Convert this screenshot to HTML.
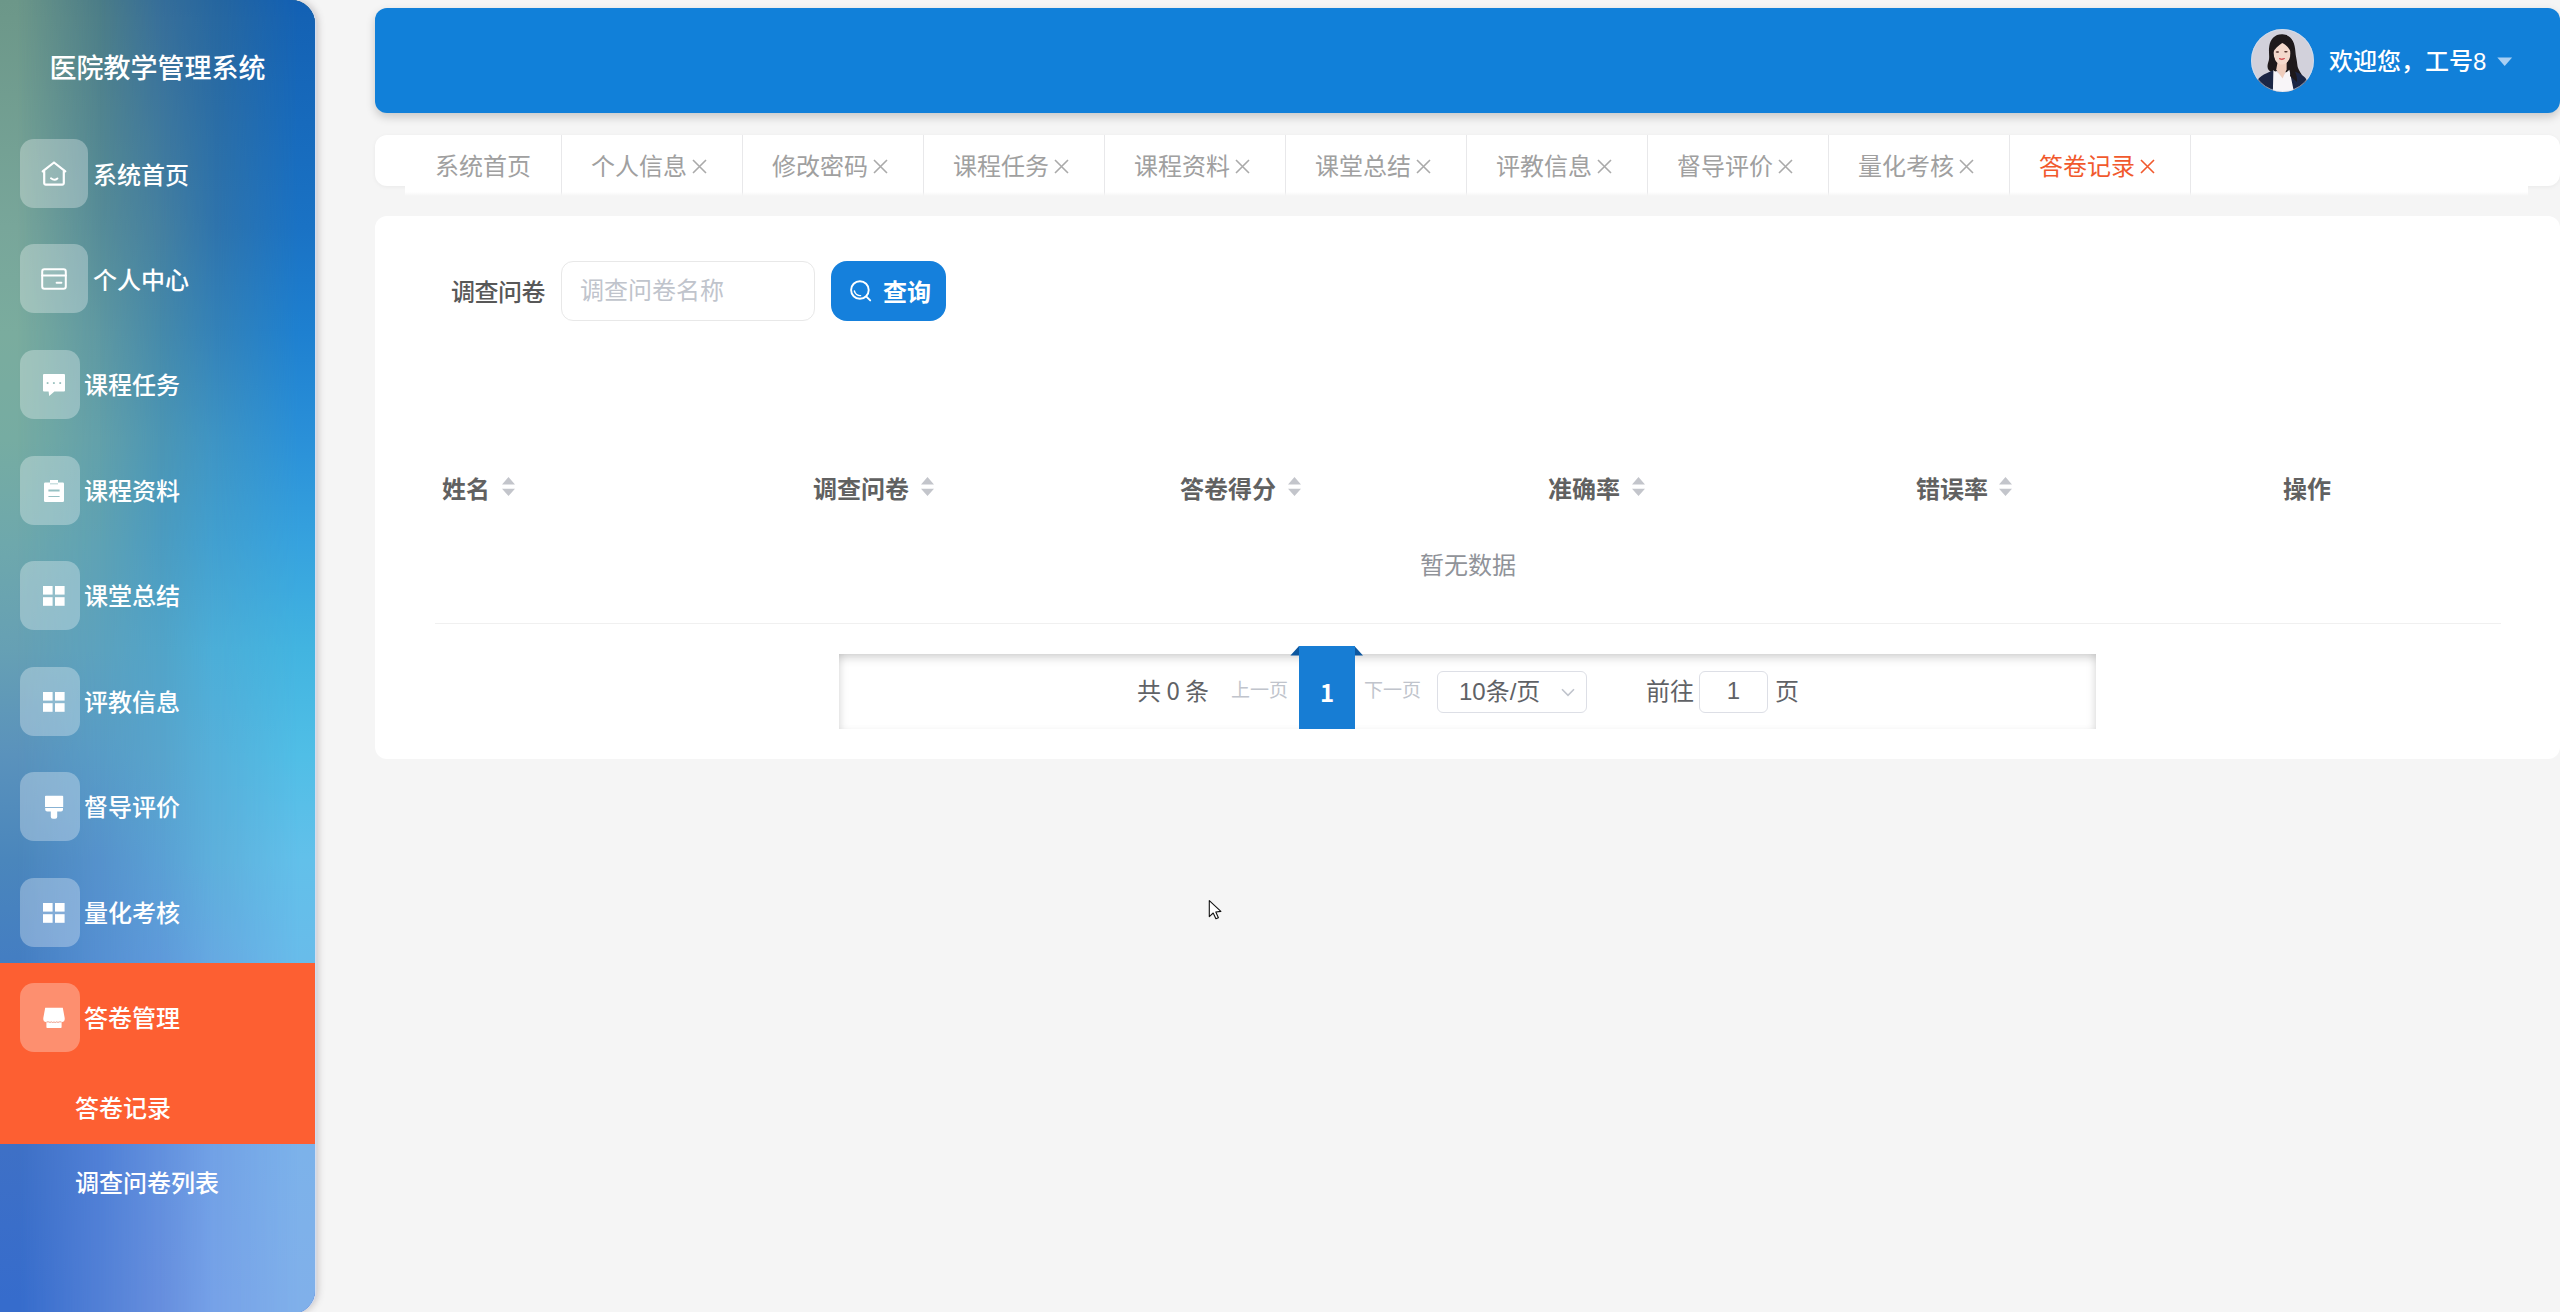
<!DOCTYPE html>
<html lang="zh-CN">
<head>
<meta charset="utf-8">
<title>医院教学管理系统</title>
<style>
*{box-sizing:border-box;margin:0;padding:0}
html,body{width:2560px;height:1312px;overflow:hidden}
body{position:relative;background:#f5f5f5;font-family:"Liberation Sans","Noto Sans CJK SC",sans-serif;color:#606266}
.abs{position:absolute}
/* ---------- sidebar ---------- */
#side{position:absolute;left:0;top:0;width:315px;height:1314px;clip-path:inset(0 0 0 0 round 0 24px 24px 0);z-index:5}
#sideshadow{position:absolute;left:0;top:0;width:315px;height:1314px;border-radius:0 24px 24px 0;box-shadow:1.5px 0 0 #d3dcee, 3px 0 7px rgba(70,55,60,.26);z-index:4}
.gl{position:absolute;left:0;top:0;width:315px;height:1312px}
#title{position:absolute;left:0;top:41px;width:315px;height:56px;line-height:56px;text-align:center;color:#fff;font-size:27px;font-weight:500;white-space:nowrap}
.mi{position:absolute;left:20px;height:69px;border-radius:14px;background:rgba(255,255,255,.3)}
.mi svg{position:absolute;display:block;overflow:visible}
.ml{position:absolute;height:40px;line-height:40px;color:#fff;font-size:24px;font-weight:500;white-space:nowrap}
#orange{position:absolute;left:0;top:963px;width:315px;height:181px;background:#fd5f32}
/* ---------- header ---------- */
#head{position:absolute;left:375px;top:8px;width:2185px;height:105px;background:#1180d9;border-radius:12px;box-shadow:0 4px 10px rgba(0,0,0,.19)}
#hello{position:absolute;left:2329px;top:42px;height:40px;line-height:40px;font-size:24px;font-weight:500;color:#fff;white-space:nowrap}
/* ---------- tabs ---------- */
#tabouter{position:absolute;left:375px;top:135px;width:2185px;height:51px;background:#fff;border-radius:12px;box-shadow:0 1px 4px rgba(0,0,0,.05)}
#tabinner{position:absolute;left:405px;top:135px;width:2123px;height:61px;background:linear-gradient(to bottom,#fff 0,#fff 57px,rgba(255,255,255,0) 61px)}
.tab{position:absolute;top:136px;height:58px;line-height:62px;margin-left:-1px;font-size:24px;color:#a0a0a0;white-space:nowrap}
.tab.on{color:#f1592d}
.sep{position:absolute;top:135px;width:1px;height:61px;margin-left:1px;background:linear-gradient(to bottom,#e8e8ea 0,#e8e8ea 57px,rgba(232,232,234,0) 61px)}
.cx{position:absolute;top:159px;width:15px;height:15px}
/* ---------- card ---------- */
#card{position:absolute;left:375px;top:216px;width:2185px;height:543px;background:#fff;border-radius:12px}
#qlabel{position:absolute;left:451px;top:273px;height:40px;line-height:40px;font-size:24px;color:#585858;font-weight:500;letter-spacing:-.5px;white-space:nowrap}
#qinput{position:absolute;left:561px;top:261px;width:254px;height:60px;border:1px solid #e8e8e8;border-radius:12px;background:#fff}
#qph{position:absolute;left:580px;top:271px;height:40px;line-height:40px;font-size:24px;color:#c0c4cc;white-space:nowrap}
#qbtn{position:absolute;left:831px;top:261px;width:115px;height:60px;border-radius:16px;background:#1580dc}
#qbtn span{position:absolute;left:52px;top:12px;height:40px;line-height:40px;font-size:24px;font-weight:700;color:#fff;white-space:nowrap}
.th{position:absolute;top:470px;height:40px;line-height:40px;font-size:24px;font-weight:700;color:#616161;white-space:nowrap}
.caret{position:absolute;top:477px;width:13px;height:19px}
#empty{position:absolute;left:1368px;top:546px;width:200px;height:40px;line-height:40px;text-align:center;font-size:24px;color:#909399}
#tline{position:absolute;left:435px;top:623px;width:2066px;height:1px;background:#f0f0f0}
/* ---------- pagination ---------- */
#pg{position:absolute;left:839px;top:654px;width:1257px;height:75px;background:#fff;box-shadow:inset 0 8px 10px -4px rgba(0,0,0,.16), inset 6px 0 8px -4px rgba(0,0,0,.10), inset -6px 0 8px -4px rgba(0,0,0,.10);overflow:hidden}
.pt{position:absolute;height:40px;line-height:40px;white-space:nowrap}
#pgact{position:absolute;left:1299px;top:646px;width:55.5px;height:83px;background:#177dd4}
#pgact span{position:absolute;left:0;top:26px;width:56px;height:40px;line-height:40px;text-align:center;font-size:24px;font-weight:700;color:#fff;font-family:'Noto Sans CJK SC',sans-serif}
.box{position:absolute;top:671px;height:42px;border:1px solid #dddfe6;border-radius:6px;background:#fff}
</style>
</head>
<body>

<!-- ================= SIDEBAR ================= -->
<div id="sideshadow"></div>
<div id="side">
<div class="gl" style="background:linear-gradient(to bottom, #6c9789 0.00%, #6d988a 1.45%, #78a69a 17.30%, #7aac9e 25.38%, #76aca2 33.46%, #6ea8ac 41.39%, #66a0b4 49.47%, #5a92bc 57.55%, #4a86bc 65.55%, #447ec2 72.94%, #3e70c6 87.73%, #366ccc 99.16%, #366ccc 100.00%)"></div>
<div class="gl" style="background:linear-gradient(to bottom, #4b7c87 0.00%, #4d7e88 1.45%, #568c98 17.30%, #5e98a2 25.38%, #62a0aa 33.46%, #5ea2b4 41.39%, #5ca2be 49.47%, #589cc6 57.55%, #5692cc 65.55%, #5690d2 72.94%, #5080d6 87.73%, #5280d6 99.16%, #5280d6 100.00%);-webkit-mask-image:linear-gradient(to right, transparent 18px, #000 100px);mask-image:linear-gradient(to right, transparent 18px, #000 100px)"></div>
<div class="gl" style="background:linear-gradient(to bottom, #366e99 0.00%, #38709a 1.45%, #4580a0 17.30%, #468aaa 25.38%, #4c96b4 33.46%, #4c9cc0 41.39%, #52a4c8 49.47%, #58a4cc 57.55%, #5aa0d4 65.55%, #5e9ada 72.94%, #6290de 87.73%, #668ede 99.16%, #668ede 100.00%);-webkit-mask-image:linear-gradient(to right, transparent 100px, #000 160px);mask-image:linear-gradient(to right, transparent 100px, #000 160px)"></div>
<div class="gl" style="background:linear-gradient(to bottom, #26669f 0.00%, #2868a0 1.45%, #2f74ac 17.30%, #3482b8 25.38%, #3e94c4 33.46%, #42a0d0 41.39%, #4caed8 49.47%, #56b0da 57.55%, #5eb0dc 65.55%, #66aae2 72.94%, #72a2e6 87.73%, #76a2e8 99.16%, #76a2e8 100.00%);-webkit-mask-image:linear-gradient(to right, transparent 160px, #000 215px);mask-image:linear-gradient(to right, transparent 160px, #000 215px)"></div>
<div class="gl" style="background:linear-gradient(to bottom, #1260b4 0.00%, #1462b4 1.45%, #1a72c4 17.30%, #1e80d0 25.38%, #2a90d8 33.46%, #36a2de 41.39%, #42b4e0 49.47%, #50bee6 57.55%, #62c0ea 65.55%, #68bcea 72.94%, #7cb2ea 87.73%, #80b0ea 99.16%, #80b0ea 100.00%);-webkit-mask-image:linear-gradient(to right, transparent 215px, #000 300px);mask-image:linear-gradient(to right, transparent 215px, #000 300px)"></div>
  <div id="title">医院教学管理系统</div>

  <!-- 系统首页 -->
  <div class="mi" style="top:139px;width:68px">
    <svg style="left:21px;top:22px" width="26" height="25" viewBox="0 0 26 25" fill="none" stroke="#fff" stroke-width="2" stroke-linejoin="round" stroke-linecap="round">
      <path d="M3.2 22 V10.4 L1.7 10.4 L13 1.5 L24.3 10.4 L22.8 10.4 V22 a1.6 1.6 0 0 1 -1.6 1.6 H4.8 a1.6 1.6 0 0 1 -1.6 -1.6 Z" stroke-width="2.2"/>
      <path d="M10 17.3 q3.4 2.8 6.4 .2" stroke-width="2"/>
    </svg>
  </div>
  <div class="ml" style="left:93px;top:156px">系统首页</div>

  <!-- 个人中心 -->
  <div class="mi" style="top:244px;width:68px">
    <svg style="left:21px;top:24px" width="26" height="22" viewBox="0 0 26 22" fill="none" stroke="#fff" stroke-width="2" stroke-linejoin="round" stroke-linecap="round">
      <rect x="1.2" y="1.2" width="23.6" height="19.6" rx="2.2"/>
      <path d="M1.2 7.6 H24.8"/>
      <path d="M15.6 14.8 H20.4"/>
    </svg>
  </div>
  <div class="ml" style="left:93px;top:261px">个人中心</div>

  <!-- 课程任务 -->
  <div class="mi" style="top:350px;width:60px">
    <svg style="left:23px;top:24px" width="22" height="22" viewBox="0 0 22 22" fill="#fff">
      <path fill-rule="evenodd" d="M1 0 H21 a1 1 0 0 1 1 1 V16.4 a1 1 0 0 1 -1 1 H11.4 L6.2 22 L5.6 17.4 H1 A1 1 0 0 1 0 16.4 V1 A1 1 0 0 1 1 0 Z M4.6 7.9 a1.05 1.05 0 1 0 0.01 0 Z M10.9 7.9 a1.05 1.05 0 1 0 0.01 0 Z M17.2 7.9 a1.05 1.05 0 1 0 0.01 0 Z"/>
    </svg>
  </div>
  <div class="ml" style="left:84px;top:366px">课程任务</div>

  <!-- 课程资料 -->
  <div class="mi" style="top:456px;width:60px">
    <svg style="left:24px;top:24px" width="20" height="22" viewBox="0 0 20 22" fill="#fff">
      <path fill-rule="evenodd" d="M6 0 H14 V2.6 H18.8 a1.2 1.2 0 0 1 1.2 1.2 V20.8 a1.2 1.2 0 0 1 -1.2 1.2 H1.2 A1.2 1.2 0 0 1 0 20.8 V3.8 A1.2 1.2 0 0 1 1.2 2.6 H6 Z M6 3.5 V4.2 H14 V3.5 Z M4.4 9.4 V11.4 H15.6 V9.4 Z M4.4 15.9 V17.1 H15.6 V15.9 Z"/>
    </svg>
  </div>
  <div class="ml" style="left:84px;top:472px">课程资料</div>

  <!-- 课堂总结 -->
  <div class="mi" style="top:561px;width:60px">
    <svg style="left:23px;top:25px" width="22" height="20" viewBox="0 0 22 20" fill="#fff">
      <rect x="0" y="0" width="9.6" height="8.6"/><rect x="12" y="0" width="9.6" height="8.6"/>
      <rect x="0" y="11.2" width="9.6" height="8.6"/><rect x="12" y="11.2" width="9.6" height="8.6"/>
    </svg>
  </div>
  <div class="ml" style="left:84px;top:577px">课堂总结</div>

  <!-- 评教信息 -->
  <div class="mi" style="top:667px;width:60px">
    <svg style="left:23px;top:25px" width="22" height="20" viewBox="0 0 22 20" fill="#fff">
      <rect x="0" y="0" width="9.6" height="8.6"/><rect x="12" y="0" width="9.6" height="8.6"/>
      <rect x="0" y="11.2" width="9.6" height="8.6"/><rect x="12" y="11.2" width="9.6" height="8.6"/>
    </svg>
  </div>
  <div class="ml" style="left:84px;top:683px">评教信息</div>

  <!-- 督导评价 -->
  <div class="mi" style="top:772px;width:60px">
    <svg style="left:24px;top:24px" width="20" height="23" viewBox="0 0 20 23" fill="#fff">
      <path d="M1.8 -.3 H18.4 a.8 .8 0 0 1 .8 .8 V10.9 H1 V.5 a.8 .8 0 0 1 .8 -.8 Z"/>
      <path d="M1.2 11.9 H19 V13.4 a2 2 0 0 1 -2 2 H13.2 V20.8 a2 2 0 0 1 -2 2 H8.8 a2 2 0 0 1 -2 -2 V15.4 H3.2 a2 2 0 0 1 -2 -2 Z"/>
    </svg>
  </div>
  <div class="ml" style="left:84px;top:788px">督导评价</div>

  <!-- 量化考核 -->
  <div class="mi" style="top:878px;width:60px">
    <svg style="left:23px;top:25px" width="22" height="20" viewBox="0 0 22 20" fill="#fff">
      <rect x="0" y="0" width="9.6" height="8.6"/><rect x="12" y="0" width="9.6" height="8.6"/>
      <rect x="0" y="11.2" width="9.6" height="8.6"/><rect x="12" y="11.2" width="9.6" height="8.6"/>
    </svg>
  </div>
  <div class="ml" style="left:84px;top:894px">量化考核</div>

  <!-- 答卷管理 (active) -->
  <div id="orange"></div>
  <div class="mi" style="top:983px;width:60px">
    <svg style="left:23px;top:25px" width="22" height="21" viewBox="0 0 22 21" fill="#fff">
      <path d="M2.2 -.3 H19.8 L21.7 10 V11.6 a2.4 2.4 0 0 1 -2.4 2.4 H18.6 V19.2 a.8 .8 0 0 1 -.8 .8 H4.2 a.8 .8 0 0 1 -.8 -.8 V14 H2.7 A2.4 2.4 0 0 1 .3 11.6 V10 Z"/>
      <path d="M3.6 13.9 H5.6 q1.4 1 2.8 0 q1.3 1.1 2.6 .1 q1.3 1 2.6 -.1 q1.4 1 2.8 0 H18.4" fill="none" stroke="#e0603c" stroke-opacity=".75" stroke-width=".8"/>
    </svg>
  </div>
  <div class="ml" style="left:84px;top:999px">答卷管理</div>
  <div class="ml" style="left:75px;top:1089px">答卷记录</div>
  <div class="ml" style="left:75px;top:1164px">调查问卷列表</div>
</div>

<!-- ================= HEADER ================= -->
<div id="head"></div>
<svg class="abs" style="left:2251px;top:29px" width="63" height="63" viewBox="0 0 63 63">
  <defs><clipPath id="av"><circle cx="31.5" cy="31.5" r="31.5"/></clipPath></defs>
  <g clip-path="url(#av)">
    <rect width="63" height="63" fill="#d2d1db"/>
    <!-- hair back -->
    <path d="M31.5 5.3 C24 5 19.5 10 18.3 17 C17.3 23 18.8 27 17.8 31.5 C16.8 35 15.6 38 17.6 41 C19.5 43.5 23 43 26 42 L40 44 C44 49 44 54 46 57.5 C50 56 53 52 51.5 47.5 C50 43.5 46.5 40 46.3 35.5 C46 31 44.6 27 44.4 22.5 C44 13 40 5.6 31.5 5.3 Z" fill="#1e191b"/>
    <!-- jacket -->
    <path d="M5.5 54 C7 48 12 45.5 22.4 41.3 L30 52 L41 41.8 C48 44 54.5 46.5 56.5 53 L60 66 H3 Z" fill="#1b2645"/>
    <!-- shirt -->
    <path d="M22.4 40.2 L31 47 L38.4 40.8 L43.6 66 H21.8 Z" fill="#f8f5f8"/>
    <!-- neck / chest -->
    <path d="M26.8 32 H35.6 V40.4 L31.6 49.4 L25.2 40.8 Z" fill="#efcdbd"/>
    <!-- face -->
    <path d="M31 13.2 C36.5 13.2 39.8 17.8 39.6 24.4 C39.4 30.6 35.6 35.6 31 35.6 C26.4 35.6 22.7 30.6 22.5 24.4 C22.3 17.8 25.5 13.2 31 13.2 Z" fill="#f4d9cc"/>
    <!-- fringe -->
    <path d="M21.6 24.5 C21 15.5 26 11.2 31 11.4 C36.5 11.5 40.6 15.5 40.4 24 C38.8 19.6 35 15.6 31.2 14 C27.6 16.6 23.8 19.5 21.6 24.5 Z" fill="#1e191b"/>
    <!-- hair sides -->
    <path d="M39.2 21 C41.5 26 40.6 32 41.8 37 C42.8 41.5 46.5 45 46 53 L39 47 C40.4 42.6 37.2 39 38.4 33.6 C39.4 29.4 39.8 25 39.2 21 Z" fill="#1e191b"/>
    <path d="M22.2 22 C21 27 22.6 31 21.4 35 C20.2 38.6 21.4 41.6 25 42.6 C23.6 38.6 25.2 35.4 24 31.4 C23 27.6 22.4 25 22.2 22 Z" fill="#1e191b"/>
    <!-- eyes, brows & lips -->
    <ellipse cx="26.4" cy="22.9" rx="1.8" ry=".75" fill="#4b2a25"/>
    <ellipse cx="34.9" cy="22.8" rx="1.8" ry=".75" fill="#4b2a25"/>
    <path d="M28 29.6 Q30.8 31.6 33.8 29.5 Q30.8 30.4 28 29.6 Z" fill="#d2454c" stroke="#d2454c" stroke-width=".7"/>
  </g>
  <circle cx="31.5" cy="31.5" r="31" fill="none" stroke="#cfe6fb" stroke-opacity=".55" stroke-width="1"/>
</svg>
<div id="hello">欢迎您，工号8</div>
<svg class="abs" style="left:2497px;top:57px" width="16" height="10" viewBox="0 0 16 10"><path d="M.3 .5 H15.1 L7.7 9 Z" fill="#a9cff3"/></svg>

<!-- ================= TABS ================= -->
<div id="tabouter"></div>
<div id="tabinner"></div>
<div class="tab" style="left:436px">系统首页</div>
<div class="sep" style="left:560px"></div>
<div class="tab" style="left:592px">个人信息</div>
<div class="sep" style="left:741px"></div>
<div class="tab" style="left:773px">修改密码</div>
<div class="sep" style="left:922px"></div>
<div class="tab" style="left:954px">课程任务</div>
<div class="sep" style="left:1103px"></div>
<div class="tab" style="left:1135px">课程资料</div>
<div class="sep" style="left:1284px"></div>
<div class="tab" style="left:1316px">课堂总结</div>
<div class="sep" style="left:1465px"></div>
<div class="tab" style="left:1497px">评教信息</div>
<div class="sep" style="left:1646px"></div>
<div class="tab" style="left:1678px">督导评价</div>
<div class="sep" style="left:1827px"></div>
<div class="tab" style="left:1859px">量化考核</div>
<div class="sep" style="left:2008px"></div>
<div class="tab on" style="left:2040px">答卷记录</div>
<div class="sep" style="left:2189px"></div>
<svg class="cx" style="left:692px" viewBox="0 0 15 15"><path d="M1 1 L14 14 M14 1 L1 14" stroke="#aaaaaa" stroke-width="1.6" fill="none"/></svg>
<svg class="cx" style="left:873px" viewBox="0 0 15 15"><path d="M1 1 L14 14 M14 1 L1 14" stroke="#aaaaaa" stroke-width="1.6" fill="none"/></svg>
<svg class="cx" style="left:1054px" viewBox="0 0 15 15"><path d="M1 1 L14 14 M14 1 L1 14" stroke="#aaaaaa" stroke-width="1.6" fill="none"/></svg>
<svg class="cx" style="left:1235px" viewBox="0 0 15 15"><path d="M1 1 L14 14 M14 1 L1 14" stroke="#aaaaaa" stroke-width="1.6" fill="none"/></svg>
<svg class="cx" style="left:1416px" viewBox="0 0 15 15"><path d="M1 1 L14 14 M14 1 L1 14" stroke="#aaaaaa" stroke-width="1.6" fill="none"/></svg>
<svg class="cx" style="left:1597px" viewBox="0 0 15 15"><path d="M1 1 L14 14 M14 1 L1 14" stroke="#aaaaaa" stroke-width="1.6" fill="none"/></svg>
<svg class="cx" style="left:1778px" viewBox="0 0 15 15"><path d="M1 1 L14 14 M14 1 L1 14" stroke="#aaaaaa" stroke-width="1.6" fill="none"/></svg>
<svg class="cx" style="left:1959px" viewBox="0 0 15 15"><path d="M1 1 L14 14 M14 1 L1 14" stroke="#aaaaaa" stroke-width="1.6" fill="none"/></svg>
<svg class="cx" style="left:2140px" viewBox="0 0 15 15"><path d="M1 1 L14 14 M14 1 L1 14" stroke="#f1592d" stroke-width="1.6" fill="none"/></svg>

<!-- ================= CARD ================= -->
<div id="card"></div>
<div id="qlabel">调查问卷</div>
<div id="qinput"></div>
<div id="qph">调查问卷名称</div>
<div id="qbtn">
  <svg class="abs" style="left:18px;top:18px" width="24" height="24" viewBox="0 0 24 24" fill="none" stroke="#fff" stroke-linecap="round">
    <circle cx="10.9" cy="11" r="8.8" stroke-width="1.9"/>
    <path d="M17.4 17.6 L21.2 21.4" stroke-width="1.9"/>
    <path d="M5.4 12 A5.8 5.8 0 0 0 11.6 16.6" stroke-width="1.4"/>
  </svg>
  <span>查询</span>
</div>

<div class="th" style="left:442px">姓名</div>
<div class="th" style="left:813px">调查问卷</div>
<div class="th" style="left:1180px">答卷得分</div>
<div class="th" style="left:1548px">准确率</div>
<div class="th" style="left:1916px">错误率</div>
<div class="th" style="left:2283px">操作</div>
<svg class="caret" style="left:502px" viewBox="0 0 13 19"><path d="M6.5 0 L13 7.4 H0 Z M0 11.8 H13 L6.5 19 Z" fill="#c3c5cb"/></svg>
<svg class="caret" style="left:921px" viewBox="0 0 13 19"><path d="M6.5 0 L13 7.4 H0 Z M0 11.8 H13 L6.5 19 Z" fill="#c3c5cb"/></svg>
<svg class="caret" style="left:1288px" viewBox="0 0 13 19"><path d="M6.5 0 L13 7.4 H0 Z M0 11.8 H13 L6.5 19 Z" fill="#c3c5cb"/></svg>
<svg class="caret" style="left:1632px" viewBox="0 0 13 19"><path d="M6.5 0 L13 7.4 H0 Z M0 11.8 H13 L6.5 19 Z" fill="#c3c5cb"/></svg>
<svg class="caret" style="left:1999px" viewBox="0 0 13 19"><path d="M6.5 0 L13 7.4 H0 Z M0 11.8 H13 L6.5 19 Z" fill="#c3c5cb"/></svg>
<div id="empty">暂无数据</div>
<div id="tline"></div>

<!-- ================= PAGINATION ================= -->
<div id="pg"></div>
<div class="pt" style="left:1137px;top:670px;font-size:24px;color:#606266;font-family:'Noto Sans CJK SC',sans-serif">共 0 条</div>
<div class="pt" style="left:1231px;top:671px;font-size:19px;color:#c0c4cc">上一页</div>
<svg class="abs" style="left:1290px;top:646px" width="74" height="10" viewBox="0 0 74 10"><path d="M9 0 L.4 9.6 H9 Z M64.4 0 L73 9.6 H64.4 Z" fill="#0d579f"/></svg>
<div id="pgact"><span>1</span></div>
<div class="pt" style="left:1364px;top:671px;font-size:19px;color:#c0c4cc">下一页</div>
<div class="box" style="left:1437px;width:150px"></div>
<div class="pt" style="left:1459px;top:672px;font-size:24px;color:#606266">10条/页</div>
<svg class="abs" style="left:1561px;top:688px" width="14" height="9" viewBox="0 0 14 9"><path d="M1 1.2 L7 7.4 L13 1.2" fill="none" stroke="#c0c4cc" stroke-width="1.6"/></svg>
<div class="pt" style="left:1646px;top:672px;font-size:24px;color:#606266">前往</div>
<div class="box" style="left:1699px;width:69px"></div>
<div class="pt" style="left:1699px;top:671px;width:69px;text-align:center;font-size:24px;color:#606266">1</div>
<div class="pt" style="left:1775px;top:672px;font-size:24px;color:#606266">页</div>

<svg class="abs" style="left:1208px;top:899px" width="15" height="22" viewBox="0 0 15 22"><path d="M1.3 1.6 V17.6 L5.2 14 L7.9 19.8 L10.4 18.7 L7.8 13 L12.9 12.4 Z" fill="#fff" stroke="#111" stroke-width="1.1" stroke-linejoin="round"/></svg>
</body>
</html>
